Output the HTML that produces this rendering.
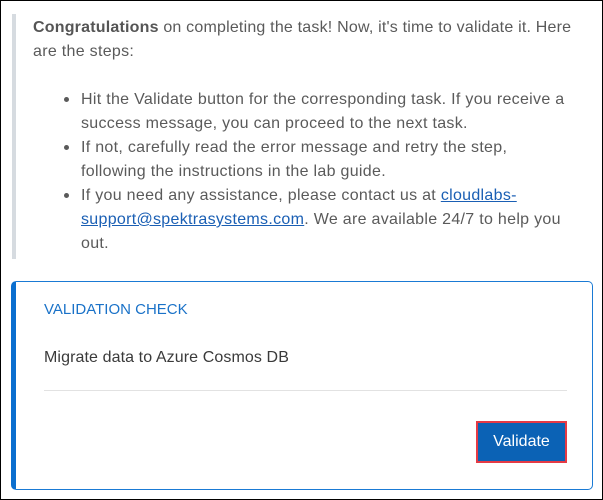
<!DOCTYPE html>
<html><head><meta charset="utf-8"><style>
*{margin:0;padding:0;box-sizing:border-box}
body{width:603px;height:500px;background:#fff;position:relative;overflow:hidden;font-family:"Liberation Sans",sans-serif;color:#5a5a5a;font-size:16px;letter-spacing:0.3px}
.frame{position:absolute;left:0;top:0;width:603px;height:500px;border:1.5px solid #000}
.bar{position:absolute;left:12px;top:14px;width:4px;height:245px;background:#d6dbe0}
.l{position:absolute;white-space:nowrap;line-height:20px}
.dot{position:absolute;width:5px;height:5px;border-radius:50%;background:#5a5a5a}
a{color:#1a5fb4;text-decoration:underline}
.card{position:absolute;left:11px;top:281px;width:582px;height:209px;border:1px solid #1a7ad4;border-left:5px solid #0b6fcf;border-radius:5px}
.hr{position:absolute;left:44px;top:390px;width:523px;height:1px;background:#e2e2e2}
.btn{position:absolute;left:476px;top:421px;width:91px;height:42px;border:2px solid #e53a45;background:#0b62b5;color:#fff;font-size:16px;letter-spacing:0;text-align:center;line-height:38px}
</style></head><body>
<div class="frame"></div>
<div class="bar"></div>
<div class="l" style="left:33px;top:18px;letter-spacing:0.2px"><b style="color:#555">Congratulations</b> on completing the task! Now, it's time to validate it. Here</div>
<div class="l" style="left:33px;top:42px">are the steps:</div>
<div class="dot" style="left:64px;top:97px"></div>
<div class="l" style="left:81px;top:90px">Hit the Validate button for the corresponding task. If you receive a</div>
<div class="l" style="left:81px;top:114px">success message, you can proceed to the next task.</div>
<div class="dot" style="left:64px;top:145px"></div>
<div class="l" style="left:81px;top:138px">If not, carefully read the error message and retry the step,</div>
<div class="l" style="left:81px;top:162px">following the instructions in the lab guide.</div>
<div class="dot" style="left:64px;top:193px"></div>
<div class="l" style="left:81px;top:186px">If you need any assistance, please contact us at <a>cloudlabs-</a></div>
<div class="l" style="left:81px;top:210px"><a>support@spektrasystems.com</a>. We are available 24/7 to help you</div>
<div class="l" style="left:81px;top:234px">out.</div>
<div class="card"></div>
<div class="l" style="left:44px;top:300px;color:#1a72c8;font-size:15px;letter-spacing:0">VALIDATION CHECK</div>
<div class="l" style="left:44px;top:348px;color:#3a3a3a;letter-spacing:0.1px">Migrate data to Azure Cosmos DB</div>
<div class="hr"></div>
<div class="btn">Validate</div>
</body></html>
